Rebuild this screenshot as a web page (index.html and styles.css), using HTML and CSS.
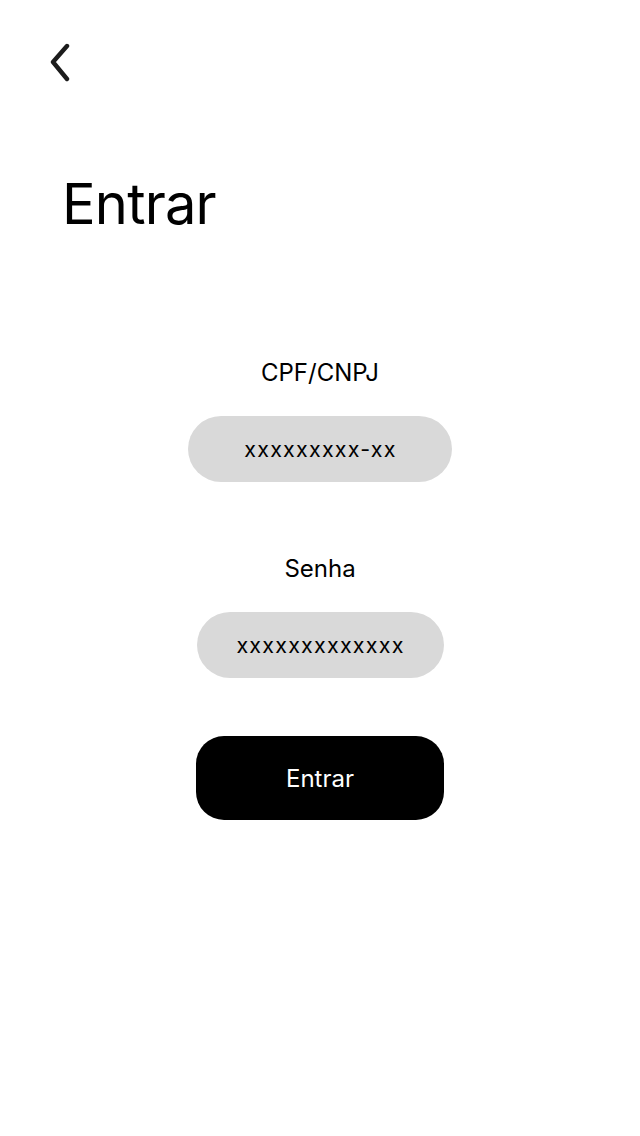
FILE: index.html
```html
<!DOCTYPE html>
<html lang="pt">
<head>
<meta charset="utf-8">
<link rel="stylesheet" href="styles.css">
<title>Entrar</title>
</head>
<body>
<main class="screen">
  <header class="topbar">
    <button class="back" aria-label="Voltar">
      <svg width="24" height="40" viewBox="0 0 24 40"><path d="M20 4 L6 20 L20 37" fill="none" stroke="#1c1c1c" stroke-width="4.4" stroke-linecap="round" stroke-linejoin="round"/></svg>
    </button>
  </header>
  <h1 class="title">Entrar</h1>
  <form class="form">
    <label class="field-label">CPF/CNPJ</label>
    <div class="input input-cpf">xxxxxxxxx-xx</div>
    <label class="field-label field-label-second">Senha</label>
    <div class="input input-pass">xxxxxxxxxxxxx</div>
    <button type="button" class="submit">Entrar</button>
  </form>
</main>
</body>
</html>
```
FILE: styles.css
```css
* { box-sizing: border-box; }
html, body { margin: 0; padding: 0; background: #fff; }
body { font-family: Inter, "Noto Sans", sans-serif; color: #000; }
.screen { width: 640px; min-height: 1136px; display: flex; flex-direction: column; }
.topbar { padding: 42px 0 0 47px; height: 82px; }
.back { border: 0; background: none; padding: 0; margin: 0; display: block; width: 24px; height: 40px; }
.back svg { display: block; }
.title { margin: 89px 0 0 62px; font-size: 56px; line-height: 66px; font-weight: 400; letter-spacing: -0.8px; }
.form { display: flex; flex-direction: column; align-items: center; margin-top: 122px; }
.field-label { font-size: 24px; line-height: 28px; display: block; }
.field-label-second { margin-top: 73px; }
.input { margin-top: 29px; height: 66px; border-radius: 33px; background: #d9d9d9; display: flex; align-items: center; justify-content: center; font-size: 21.5px; letter-spacing: 1.2px; padding-left: 1px; }
.input-cpf { width: 264px; }
.input-pass { width: 247px; margin-top: 29px; }
.submit { margin-top: 58px; width: 248px; height: 84px; border: 0; border-radius: 28px; background: #000; color: #fff; font-family: inherit; font-size: 24px; padding-top: 2px; }
```
